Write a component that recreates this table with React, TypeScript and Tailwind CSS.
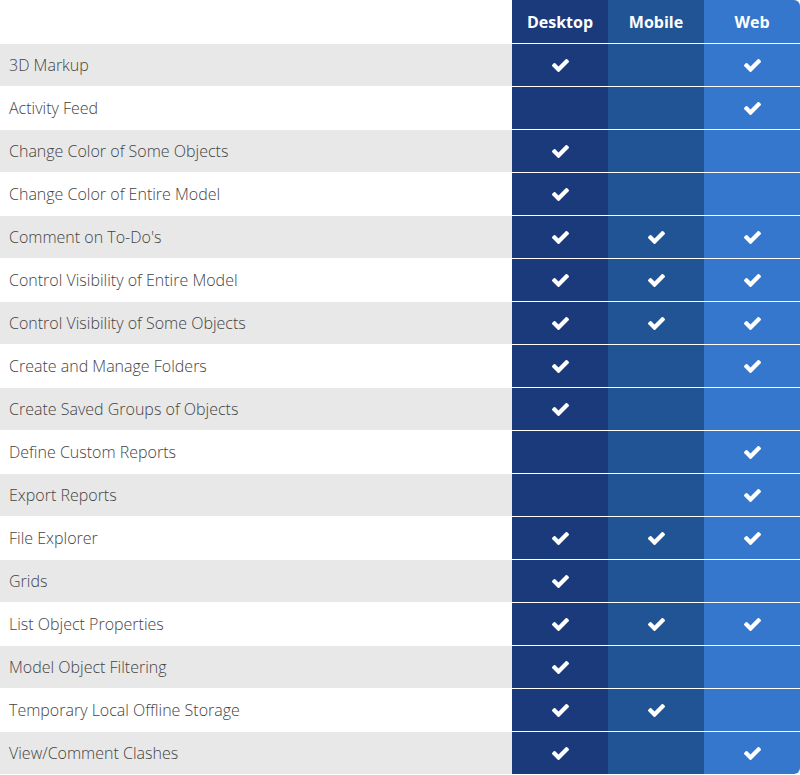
import React from "react";

const rows: [string, boolean, boolean, boolean][] = [
  ["3D Markup", true, false, true],
  ["Activity Feed", false, false, true],
  ["Change Color of Some Objects", true, false, false],
  ["Change Color of Entire Model", true, false, false],
  ["Comment on To-Do's", true, true, true],
  ["Control Visibility of Entire Model", true, true, true],
  ["Control Visibility of Some Objects", true, true, true],
  ["Create and Manage Folders", true, false, true],
  ["Create Saved Groups of Objects", true, false, false],
  ["Define Custom Reports", false, false, true],
  ["Export Reports", false, false, true],
  ["File Explorer", true, true, true],
  ["Grids", true, false, false],
  ["List Object Properties", true, true, true],
  ["Model Object Filtering", true, false, false],
  ["Temporary Local Offline Storage", true, true, false],
  ["View/Comment Clashes", true, false, true],
];

const Check = () => (
  <svg width="17" height="13" viewBox="121 338 1550 1184" className="fill-white">
    <path d="M1671 566q0 40-28 68l-724 724-136 136q-28 28-68 28t-68-28l-136-136-362-362q-28-28-28-68t28-68l136-136q28-28 68-28t68 28l294 295 656-657q28-28 68-28t68 28l136 136q28 28 28 68z" />
  </svg>
);

const Cell = ({ on, cls }: { on: boolean; cls: string }) => (
  <div className={`h-[42px] flex items-center justify-center ${cls}`}>
    {on && <Check />}
  </div>
);

export default function App() {
  return (
    <div className="w-[800px] h-[775px] bg-white" style={{ fontFamily: '"Open Sans", sans-serif' }}>
      <div className="grid grid-cols-[512px_96px_96px_96px]">
        <div className="h-[43px] bg-white" />
        <div className="h-[43px] bg-[#1b3a7b] text-white font-bold text-[16px] flex items-center justify-center">Desktop</div>
        <div className="h-[43px] bg-[#215494] text-white font-bold text-[16px] flex items-center justify-center">Mobile</div>
        <div className="h-[43px] bg-[#3577cd] text-white font-bold text-[16px] flex items-center justify-center rounded-tr-[6px]">Web</div>
        {rows.map(([label, d, m, w], i) => {
          const last = i === rows.length - 1;
          return (
            <React.Fragment key={label}>
              <div className="border-t border-white">
                <div className={`h-[42px] flex items-center pl-[9px] text-[16px] font-light text-[#444444] ${i % 2 === 0 ? "bg-[#e8e8e8]" : "bg-white"}`}>
                  {label}
                </div>
              </div>
              <div className="border-t border-white">
                <Cell on={d} cls="bg-[#1b3a7b]" />
              </div>
              <div className="border-t border-white">
                <Cell on={m} cls="bg-[#215494]" />
              </div>
              <div className="border-t border-white">
                <Cell on={w} cls={`bg-[#3577cd] ${last ? "rounded-br-[6px]" : ""}`} />
              </div>
            </React.Fragment>
          );
        })}
      </div>
    </div>
  );
}
